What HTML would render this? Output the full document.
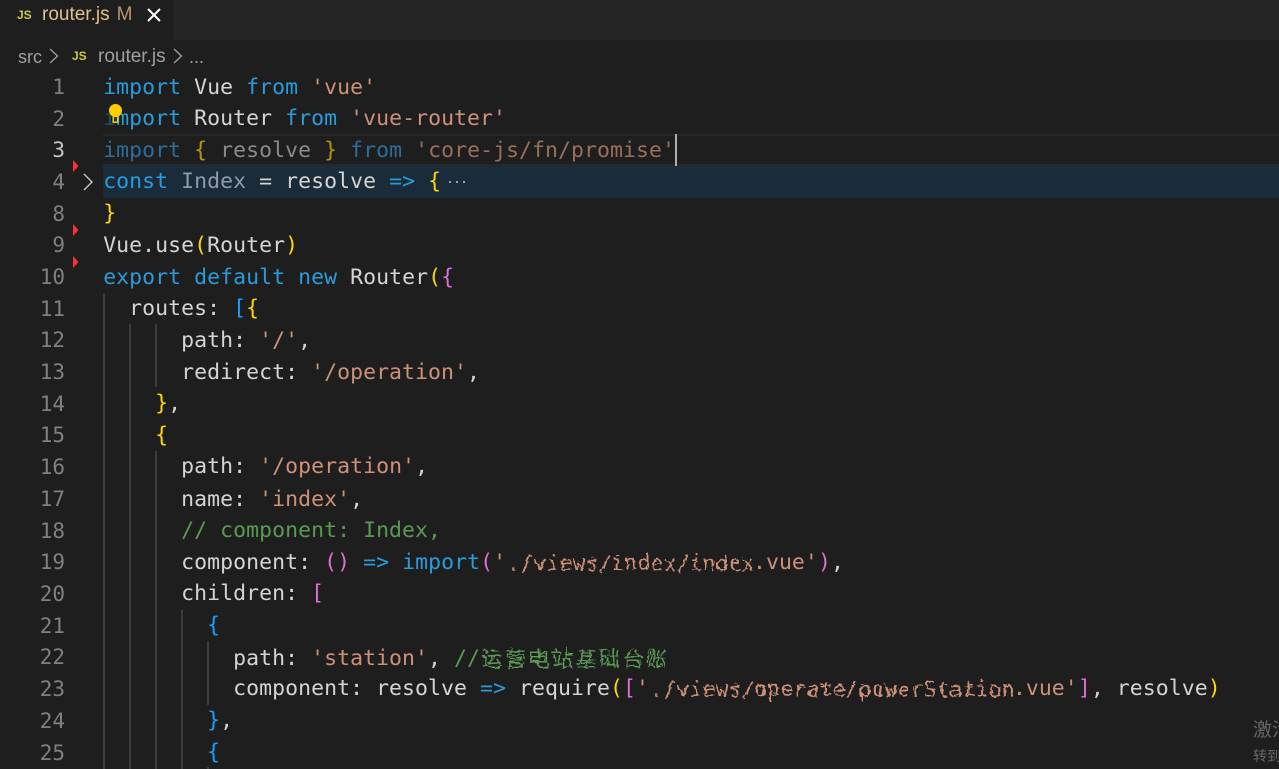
<!DOCTYPE html>
<html><head><meta charset="utf-8"><style>
html,body{margin:0;padding:0;background:#1e1e1e;width:1279px;height:769px;overflow:hidden}
#r{position:relative;width:1279px;height:769px;overflow:hidden;background:#1e1e1e;font-family:"DejaVu Sans Mono","Liberation Mono",monospace;font-size:21.5px;color:#d4d4d4}
.a{position:absolute}
.l{position:absolute;left:103.2px;white-space:pre;line-height:32px;height:32px;letter-spacing:.05px}
.n{position:absolute;left:20px;width:45px;text-align:right;line-height:32px;color:#808080;font-size:21px}
.k{color:#2a9bdb}.s{color:#ce9178}.c{color:#5a9a55}.y{color:#ffd700}.p{color:#da70d6}.b{color:#179fff}.w{color:#d4d4d4}
.g{position:absolute;width:1.5px;background:#3c3c3c}
.bl{display:inline-block;filter:url(#f)}
.ui{font-family:"Liberation Sans",sans-serif}
</style></head><body><div id="r">
<svg width="0" height="0" style="position:absolute"><filter id="f" x="-5%" y="-40%" width="110%" height="180%" color-interpolation-filters="sRGB"><feTurbulence type="turbulence" baseFrequency=".2 .3" numOctaves="1" seed="4" result="t"/><feMorphology in="t" operator="dilate" radius="2" result="m"/><feDisplacementMap in="SourceGraphic" in2="m" scale="7" xChannelSelector="R" yChannelSelector="G"/></filter></svg>
<div class="a" style="left:0;top:0;width:1279px;height:40px;background:#252526"></div>
<div class="a" style="left:0;top:0;width:173px;height:40px;background:#1e1e1e"></div>
<div class="a ui" style="left:17px;top:7px;font-size:12px;font-weight:bold;color:#cbcb41;line-height:16px">JS</div>
<div class="a ui" style="left:42px;top:3px;font-size:19px;line-height:24px;color:#e2c08d;white-space:pre">router.js<span style="color:#b8966a;margin-left:7px">M</span></div>
<svg class="a" style="left:147px;top:8px" width="14" height="14" viewBox="0 0 14 14"><path d="M1 1L13 13M13 1L1 13" stroke="#fff" stroke-width="2" fill="none"/></svg>
<div class="a ui" style="left:18px;top:45px;font-size:18px;line-height:24px;color:#a0a0a0">src</div>
<svg class="a" style="left:49px;top:48px" width="10" height="16" viewBox="0 0 10 16"><path d="M1 1L8.5 8L1 15" stroke="#a0a0a0" stroke-width="1.3" fill="none"/></svg>
<div class="a ui" style="left:72px;top:48px;font-size:12px;font-weight:bold;color:#cbcb41;line-height:16px">JS</div>
<div class="a ui" style="left:98px;top:45px;font-size:19px;line-height:24px;color:#a0a0a0">router.js</div>
<svg class="a" style="left:173px;top:48px" width="10" height="16" viewBox="0 0 10 16"><path d="M1 1L8.5 8L1 15" stroke="#a0a0a0" stroke-width="1.3" fill="none"/></svg>
<div class="a ui" style="left:189px;top:45px;font-size:18px;line-height:24px;color:#a0a0a0">...</div>

<div class="a" style="left:103px;top:134px;width:1176px;height:28px;border-top:2px solid #282828;border-bottom:2px solid #282828"></div>
<div class="a" style="left:103px;top:165px;width:1176px;height:33px;background:#1a2b39"></div>
<div class="a" style="left:675px;top:134px;width:2px;height:32px;background:#aeafad"></div>

<div class="g" style="left:103px;top:293px;height:476px"></div>
<div class="g" style="left:129px;top:324px;height:445px"></div>
<div class="g" style="left:155px;top:324px;height:63px"></div>
<div class="g" style="left:155px;top:451px;height:318px"></div>
<div class="g" style="left:181px;top:610px;height:159px"></div>
<div class="g" style="left:207px;top:641px;height:64px"></div>
<div class="g" style="left:207px;top:767px;height:2px"></div>

<div class="n" style="top:71px">1</div>
<div class="n" style="top:103px">2</div>
<div class="n" style="top:134px;color:#c6c6c6">3</div>
<div class="n" style="top:166px">4</div>
<div class="n" style="top:198px">8</div>
<div class="n" style="top:229px">9</div>
<div class="n" style="top:261px">10</div>
<div class="n" style="top:293px">11</div>
<div class="n" style="top:324px">12</div>
<div class="n" style="top:356px">13</div>
<div class="n" style="top:388px">14</div>
<div class="n" style="top:419px">15</div>
<div class="n" style="top:451px">16</div>
<div class="n" style="top:483px">17</div>
<div class="n" style="top:515px">18</div>
<div class="n" style="top:546px">19</div>
<div class="n" style="top:578px">20</div>
<div class="n" style="top:610px">21</div>
<div class="n" style="top:641px">22</div>
<div class="n" style="top:673px">23</div>
<div class="n" style="top:705px">24</div>
<div class="n" style="top:737px">25</div>

<svg class="a" style="left:73px;top:160px" width="6" height="12" viewBox="0 0 6 12"><path d="M0 0L5.5 6L0 12Z" fill="#f03535"/></svg>
<svg class="a" style="left:73px;top:224px" width="6" height="12" viewBox="0 0 6 12"><path d="M0 0L5.5 6L0 12Z" fill="#f03535"/></svg>
<svg class="a" style="left:73px;top:256px" width="6" height="12" viewBox="0 0 6 12"><path d="M0 0L5.5 6L0 12Z" fill="#f03535"/></svg>
<svg class="a" style="left:82px;top:173px" width="12" height="18" viewBox="0 0 12 18"><path d="M2 1L10 9L2 17" stroke="#c5c5c5" stroke-width="1.4" fill="none"/></svg>

<div class="l" style="top:72px"><span class="k">import</span> Vue <span class="k">from</span> <span class="s">'vue'</span></div>
<div class="l" style="top:103px"><span style="color:#1d4f6d">i</span><span class="k">mport</span> Router <span class="k">from</span> <span class="s">'vue-router'</span></div>
<div class="l" style="top:135px"><span style="color:#2a6f9c">import</span> <span style="color:#b5960b">{</span> <span style="color:#8a8a8a">resolve</span> <span style="color:#b5960b">}</span> <span style="color:#2a6f9c">from</span> <span style="color:#9a6f5a">'core-js/fn/promise'</span></div>
<div class="l" style="top:166px"><span class="k">const</span> <span style="color:#8f9ba5">Index</span> = resolve <span class="k">=&gt;</span> <span class="y">{</span></div>
<div class="a" style="left:449px;top:181px;width:2px;height:2px;background:#a0a0a0;box-shadow:7px 0 #a0a0a0,14px 0 #a0a0a0"></div>
<div class="l" style="top:198px"><span class="y">}</span></div>
<div class="l" style="top:230px">Vue.use<span class="y">(</span>Router<span class="y">)</span></div>
<div class="l" style="top:262px"><span class="k">export</span> <span class="k">default</span> <span class="k">new</span> Router<span class="y">(</span><span class="p">{</span></div>
<div class="l" style="top:293px">  routes: <span class="b">[</span><span class="y">{</span></div>
<div class="l" style="top:325px">      path: <span class="s">'/'</span>,</div>
<div class="l" style="top:357px">      redirect: <span class="s">'/operation'</span>,</div>
<div class="l" style="top:388px">    <span class="y">}</span>,</div>
<div class="l" style="top:420px">    <span class="y">{</span></div>
<div class="l" style="top:451px">      path: <span class="s">'/operation'</span>,</div>
<div class="l" style="top:484px">      name: <span class="s">'index'</span>,</div>
<div class="l" style="top:515px">      <span class="c">// component: Index,</span></div>
<div class="l" style="top:547px">      component: <span class="p">()</span> <span class="k">=&gt;</span> <span class="k">import</span><span class="p">(</span><span class="s">'<span class="bl">./views/index/index</span>.vue'</span><span class="p">)</span>,</div>
<div class="l" style="top:578px">      children: <span class="p">[</span></div>
<div class="l" style="top:610px">        <span class="b">{</span></div>
<div class="l" style="top:641px">          path: <span class="s">'station'</span>, <span class="c">//<span class="bl" style="font-family:'Noto Sans CJK SC',sans-serif;font-size:21px;letter-spacing:2.5px">运营电站基础台账</span></span></div>
<div class="l" style="top:673px">          component: resolve <span class="k">=&gt;</span> require<span class="y">(</span><span class="p">[</span><span class="s">'<span class="bl">./views/operate/powerStation</span>.vue'</span><span class="p">]</span>, resolve<span class="y">)</span></div>
<div class="l" style="top:705px">        <span class="b">}</span>,</div>
<div class="l" style="top:737px">        <span class="b">{</span></div>

<svg class="a" style="left:107px;top:102px" width="16" height="22" viewBox="0 0 16 22"><circle cx="8.5" cy="8.5" r="6.5" fill="#ffcc00"/><path d="M5.5 12h6v9h-6z" fill="#ffcc00"/><path d="M7 15h3v4.5H7z" fill="#1e3a4a"/></svg>

<div class="a" style="left:1253px;top:719px;font-family:'Liberation Sans','Noto Sans CJK SC',sans-serif;font-size:19px;line-height:24px;color:#666;white-space:nowrap">激活</div>
<div class="a" style="left:1253px;top:746px;font-family:'Liberation Sans','Noto Sans CJK SC',sans-serif;font-size:14px;line-height:20px;color:#666;white-space:nowrap">转到</div>
</div></body></html>
